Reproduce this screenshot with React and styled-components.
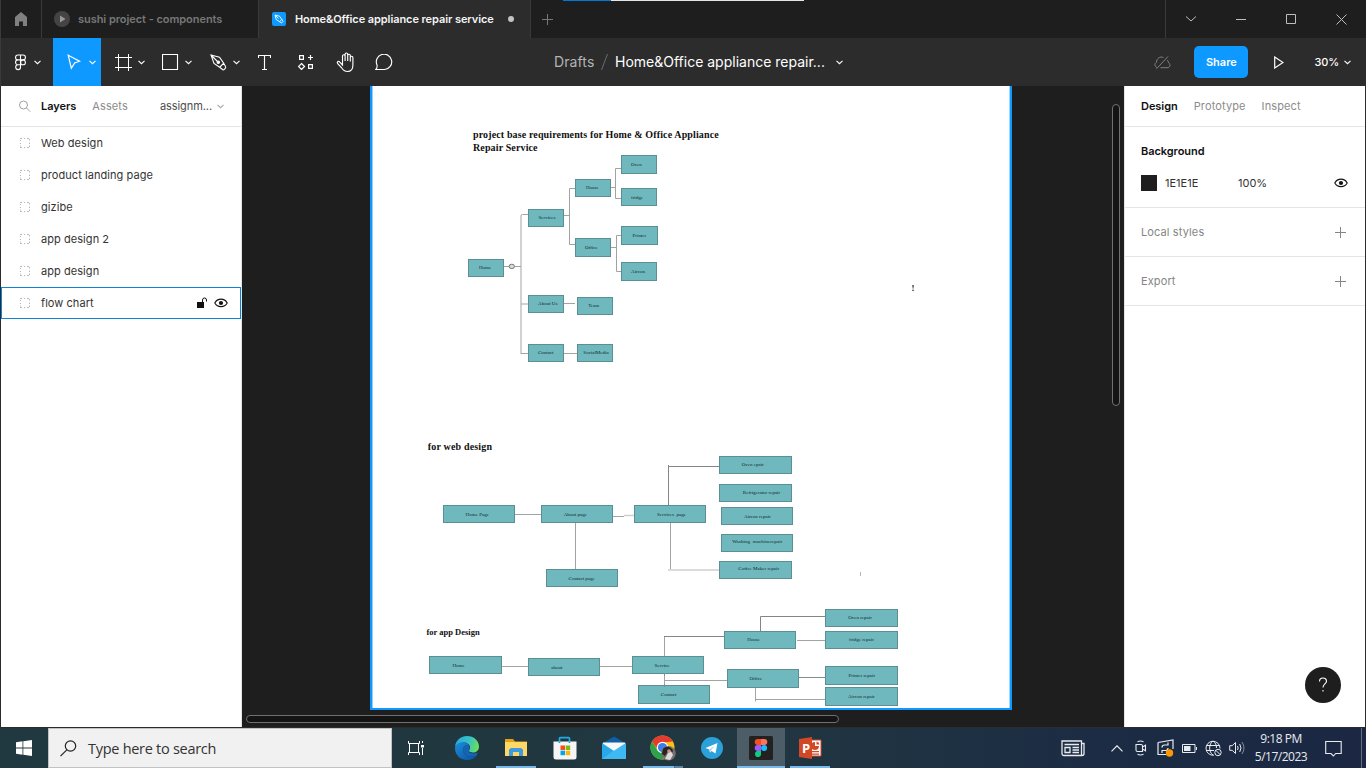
import React from "react";
import styled, { createGlobalStyle } from "styled-components";

const GlobalStyle = createGlobalStyle`
  * { box-sizing: border-box; }
  body { margin: 0; background: #1e1e1e; overflow: hidden; }
`;

const Screen = styled.div`
  width: 1366px;
  height: 768px;
  display: grid;
  grid-template-rows: 38px 48px 642px 40px;
  font-family: Inter, "Liberation Sans", sans-serif;
  font-size: 11px;
  background: #1e1e1e;
  overflow: hidden;
`;

const Icon = styled.svg.attrs((p) => ({
  fill: "none",
  stroke: p.stroke ?? "currentColor",
}))`
  display: block;
  flex: none;
`;

/* ---------- Tab bar ---------- */

const TabBar = styled.header`
  display: flex;
  background: #1e1e1e;
  border-left: 1px solid #3a3a3a;
  position: relative;
`;

const HomeTab = styled.div`
  width: 41px;
  display: flex;
  align-items: center;
  justify-content: center;
  border-right: 1px solid #3a3a3a;
  color: #808080;
`;

const Tab = styled.div`
  width: ${(p) => p.$width}px;
  display: flex;
  align-items: center;
  padding-left: ${(p) => p.$pad}px;
  gap: ${(p) => p.$gap}px;
  border-right: 1px solid #3a3a3a;
  background: ${(p) => (p.$active ? "#2c2c2c" : "#1e1e1e")};
  color: ${(p) => (p.$active ? "#f4f4f4" : "#777")};
  font-weight: 600;
  font-size: 11px;
  letter-spacing: ${(p) => p.$track}px;
  white-space: nowrap;
`;

const Unsaved = styled.span`
  width: 6px;
  height: 6px;
  border-radius: 50%;
  background: #c4c4c4;
  margin-left: 5px;
`;

const NewTab = styled.div`
  width: 33px;
  display: flex;
  align-items: center;
  justify-content: center;
  color: #777;
`;

const WindowButtons = styled.div`
  margin-left: auto;
  width: 201px;
  display: flex;
  border-left: 1px solid #3a3a3a;
  color: #bdbdbd;
`;

const WindowButton = styled.div`
  width: 50px;
  display: flex;
  align-items: center;
  justify-content: center;
`;

const Progress = styled.div`
  position: absolute;
  top: 0;
  left: 562px;
  width: 241px;
  height: 1px;
  background: linear-gradient(to right, #0078d7 48px, #e6e6e6 48px);
`;

/* ---------- Toolbar ---------- */

const Toolbar = styled.div`
  display: flex;
  background: #2c2c2c;
  border-left: 1px solid #3a3a3a;
  color: #fff;
`;

const ToolGroup = styled.div`
  display: flex;
  width: 553px;
`;

const Tool = styled.div`
  width: ${(p) => p.$width}px;
  height: 48px;
  padding-left: ${(p) => p.$pad || 0}px;
  display: flex;
  align-items: center;
  justify-content: ${(p) => (p.$pad ? "flex-start" : "center")};
  gap: ${(p) => p.$gap ?? 6}px;
  background: ${(p) => (p.$active ? "#0d99ff" : "transparent")};
`;

const FileTitle = styled.div`
  display: flex;
  align-items: center;
  font-size: 14px;
  white-space: nowrap;
`;

const Folder = styled.span`
  color: #b3b3b3;
  width: 47px;
  padding-bottom: 2px;
  letter-spacing: 0.1px;
`;

const FileName = styled.span`
  margin-left: 7px;
  width: 221px;
  padding-bottom: 2px;
  letter-spacing: 0;
`;

const ToolbarRight = styled.div`
  margin-left: auto;
  display: flex;
  align-items: center;
`;

const ShareButton = styled.div`
  width: 54px;
  height: 32px;
  margin: 0 26px 0 23px;
  border-radius: 5px;
  background: #0d99ff;
  font-weight: 600;
  font-size: 11px;
  display: flex;
  align-items: center;
  justify-content: center;
`;

const Zoom = styled.div`
  display: flex;
  align-items: center;
  gap: 5px;
  margin: 0 15px 0 30px;
  font-size: 11px;
  font-weight: 500;
  letter-spacing: -0.1px;
`;

/* ---------- Panels ---------- */

const Workspace = styled.main`
  display: grid;
  grid-template-columns: 241px 882px 241px;
  border-left: 1px solid #2c2c2c;
  border-right: 1px solid #2c2c2c;
  border-bottom: 1px solid #2c2c2c;
`;

const Sidebar = styled.aside`
  background: #fff;
  border-right: 1px solid #e5e5e5;
  color: #333;
`;

const SidebarHead = styled.div`
  height: 41px;
  padding: 0 17px 0 17px;
  display: flex;
  align-items: center;
  border-bottom: 1px solid #e5e5e5;
`;

const PanelTab = styled.span`
  margin-right: 16px;
  color: ${(p) => (p.$active ? "#111" : "#8c8c8c")};
  font-weight: ${(p) => (p.$active ? 600 : 400)};
  letter-spacing: ${(p) => (p.$active ? -0.05 : 0.12)}px;
`;

const PageName = styled.span`
  margin-left: auto;
  margin-right: 5px;
  color: #4d4d4d;
  letter-spacing: -0.08px;
`;

const LayerRow = styled.div`
  height: 32px;
  padding: 0 13px 0 17px;
  display: flex;
  align-items: center;
  gap: 8px;
  letter-spacing: 0.06px;
  box-shadow: ${(p) => (p.$selected ? "inset 0 0 0 1px #0f83d6" : "none")};
`;

const LayerLabel = styled.span`
  flex: 1;
`;

const Inspector = styled.aside`
  background: #fff;
  border-left: 1px solid #e5e5e5;
  position: relative;
  color: #333;
`;

const InspectorHead = styled.div`
  height: 41px;
  padding-left: 16px;
  display: flex;
  align-items: center;
  border-bottom: 1px solid #e5e5e5;
`;

const Section = styled.section`
  height: ${(p) => p.$height}px;
  padding: 0 17px 0 16px;
  display: flex;
  flex-direction: column;
  justify-content: center;
  gap: 16px;
  border-bottom: 1px solid #e5e5e5;
`;

const SectionRow = styled.div`
  height: 16px;
  padding-right: 2px;
  display: flex;
  align-items: center;
  justify-content: space-between;
  letter-spacing: ${(p) => (p.$muted ? 0.12 : -0.05)}px;
  color: ${(p) => (p.$muted ? "#858585" : "#111")};
  font-weight: ${(p) => (p.$bold ? 600 : 400)};
`;

const FillRow = styled.div`
  height: 16px;
  display: grid;
  grid-template-columns: 24px 73px 1fr auto;
  align-items: center;
`;

const Swatch = styled.div`
  width: 16px;
  height: 16px;
  background: #1e1e1e;
`;

const HelpButton = styled.div`
  position: absolute;
  right: 24px;
  bottom: 24px;
  width: 36px;
  height: 36px;
  border-radius: 50%;
  background: #1e1e1e;
  color: #fff;
  display: flex;
  align-items: center;
  justify-content: center;
`;

/* ---------- Canvas ---------- */

const Canvas = styled.div`
  position: relative;
  background: #1e1e1e;
  overflow: hidden;
`;

const Artboard = styled.div`
  position: absolute;
  left: 128px;
  top: -10px;
  width: 642px;
  height: 634px;
  background: #fff;
  border: 2px solid #0d99ff;
  box-shadow: inset 1px 0 #8fd0ff, inset -1px 0 #a5d8ff;
`;

const Board = styled.div`
  position: absolute;
  left: -242px;
  top: -86px;
  width: 1366px;
  height: 768px;
`;

const Wires = styled.svg`
  position: absolute;
  left: 0;
  top: 0;
  fill: none;
  stroke-width: 1;
`;

const Node = styled.div`
  position: absolute;
  left: ${(p) => p.$x}px;
  top: ${(p) => p.$y}px;
  width: ${(p) => p.$w}px;
  height: 18.3px;
  background: #6fb8be;
  border: 1px solid #5b8f93;
`;

const NodeLabel = styled.span`
  position: absolute;
  left: ${(p) => p.$x}px;
  top: ${(p) => p.$y}px;
  transform: translate(-50%, -50%);
  font: 5px/6px "Liberation Serif", serif;
  letter-spacing: ${(p) => p.$track || 0}px;
  color: #12282a;
  white-space: pre;
`;

const Heading = styled.div`
  position: absolute;
  left: ${(p) => p.$x}px;
  top: ${(p) => p.$y}px;
  font: bold ${(p) => p.$size}px/13px "Liberation Serif", serif;
  letter-spacing: ${(p) => p.$track || 0}px;
  color: #111;
  white-space: pre;
`;

const ScrollThumb = styled.div`
  position: absolute;
  left: ${(p) => p.$x}px;
  top: ${(p) => p.$y}px;
  width: ${(p) => p.$w}px;
  height: ${(p) => p.$h}px;
  border: 1px solid #707070;
  border-radius: 4px;
  background: #141414;
`;

/* ---------- Taskbar ---------- */

const Taskbar = styled.footer`
  display: flex;
  background: linear-gradient(to right, #20383f 0, #213741 55%, #1c2c44 80%, #1b2743 100%);
  color: #fff;
  font-family: "Open Sans", "Noto Sans", sans-serif;
`;

const StartButton = styled.div`
  width: 48px;
  display: flex;
  align-items: center;
  justify-content: center;
`;

const SearchBox = styled.div`
  width: 344px;
  padding-left: 11px;
  display: flex;
  align-items: center;
  gap: 11px;
  background: #f1f1f1;
  border: 1px solid #bfc3c4;
  color: #333;
  font-size: 14.5px;
  letter-spacing: -0.28px;
`;

const AppSlot = styled.div`
  width: 48px;
  margin-right: ${(p) => p.$gap ?? 1}px;
  display: flex;
  align-items: center;
  justify-content: center;
  position: relative;
  background: ${(p) => (p.$active ? "#4d5d67" : "transparent")};
`;

const Underline = styled.div`
  position: absolute;
  bottom: 0;
  left: ${(p) => p.$inset}px;
  right: ${(p) => p.$inset}px;
  height: 2px;
  background: ${(p) =>
    p.$grouped
      ? "linear-gradient(to right, #76b9ed 31px, #35566e 31px, #5a86a8 32px)"
      : "#76b9ed"};
`;

const Tray = styled.div`
  margin-left: auto;
  display: flex;
  align-items: center;
  padding-right: 4px;
  color: #e8ebef;
`;

const TrayItem = styled.div`
  width: ${(p) => p.$width || 24}px;
  display: flex;
  justify-content: center;
`;

const Clock = styled.div`
  width: 64px;
  font-size: 12px;
  line-height: 18px;
  letter-spacing: -0.5px;
  text-align: center;
`;

const ShowDesktop = styled.div`
  width: 1px;
  height: 40px;
  background: #66707f;
`;

const PowerPoint = styled.div`
  position: relative;
`;

const PowerPointLetter = styled.span`
  position: absolute;
  left: 4px;
  top: 4px;
  font: bold 13px/16px "Open Sans", sans-serif;
`;

/* ---------- Icons ---------- */

const Chevron = ({ color }) => (
  <Icon width="7" height="5" viewBox="0 0 7 5" stroke={color}>
    <path d="M.5 .8 3.5 3.7 6.5 .8" strokeWidth="1.1" />
  </Icon>
);

const Eye = () => (
  <Icon width="14" height="10" viewBox="0 0 14 10">
    <path d="M.8 5C3.5-.2 10.5-.2 13.2 5 10.5 9.8 3.5 9.8.8 5Z" stroke="#111" strokeWidth="1.1" />
    <circle cx="7" cy="5" r="2.1" fill="#111" stroke="none" />
  </Icon>
);

const FrameGlyph = () => (
  <Icon width="15" height="12" viewBox="0 0 15 12" stroke="#b8b8b8">
    <path d="M2 1.500h2M6 1.500h1M9 1.500h2M2 10.500h2M6 10.500h1M9 10.500h2M2.500 3v1M2.500 6v1M2.500 8.500v1M11.500 2v1.500M11.500 5.500v1.500M11.500 8.500v1.500" />
  </Icon>
);

const Plus = ({ size = 11 }) => (
  <Icon width={size} height={size} viewBox="0 0 11 11">
    <path d="M5.5 0v11M0 5.5h11" />
  </Icon>
);

/* ---------- Data ---------- */

const layers = ["Web design", "product landing page", "gizibe", "app design 2", "app design", "flow chart"];

// x, y, width, label, label centre x, label centre y, tracking
const nodes = [
  [621, 155.3, 36, "Oven", 636.3, 165],
  [621, 188, 36, "fridge", 637, 197.7],
  [575, 179, 36, "House", 592.3, 188.3],
  [528, 208.7, 36, "Services", 547, 218],
  [575, 238.3, 36, "Office", 591.3, 248],
  [621.4, 226.4, 36.3, "Printer", 639.4, 236],
  [621, 262.3, 36, "Aircon", 638, 271.8],
  [468, 259, 36, "Home", 485, 268.3],
  [528, 294.7, 36, "About Us", 547.7, 304.2],
  [577, 296.5, 36, "Team", 593.7, 306],
  [528, 344, 36, "Contact", 545.7, 353],
  [577, 344, 36, "SocialMedia", 596, 353],
  [442.5, 505, 72, "Home Page", 477.3, 514.5, 0.05],
  [541, 505, 72.2, "About page", 575.3, 514.5],
  [634, 505, 72.2, "Services  page", 671.5, 514.5],
  [545.6, 569, 72, "Contact page", 581.7, 578.5],
  [719, 456, 72.5, "Oven epair", 752.7, 465.3],
  [719.3, 484, 72.5, "Refrigerator repair", 761.5, 493.2],
  [721, 507, 72, "Aircon repair", 757.3, 516.5],
  [721, 534, 72, "Washing  machinerepair", 757.3, 541.7, 0.08],
  [719, 561, 72.5, "Coffee Maker repair", 758.7, 569],
  [429, 656, 72.5, "Home", 458.6, 665.8],
  [528, 658.2, 72, "about", 556.8, 668],
  [632, 656, 72, "Service", 662, 665.8],
  [638, 685.4, 72, "Contact", 668.6, 695],
  [724, 630.5, 72, "House", 753.6, 640],
  [727.4, 669.4, 72, "Office", 755.8, 679],
  [825.4, 608.5, 72.2, "Oven repair", 860, 618],
  [825.4, 630.5, 72.2, "fridge repair", 861.4, 640],
  [825.4, 666.4, 72.2, "Printer repair", 861.8, 676],
  [825.4, 687.4, 72.2, "Aircon repair", 861.4, 697],
];

const softWires =
  "M504 266.5h5M515 266.5h6M521 353.5h7M521 304h7M528 214.5h-5.5q-1.5 0-1.5 1.5V354" +
  "M564 215.5h5.5M575 188.5h-5.5V244.5h5.5M611 187.5h4.5M621 168.5h-5.5V198.5h5.5" +
  "M611 247.5h5.5M622 235.5h-5.5V271.5h5M564 303.5h11M564 353.5h13" +
  "M515 514.5h26M613 516.5h11M575.5 523v46M670.5 523v46" +
  "M501.5 666.5h26.5M600 666.5h32M664.5 656v-19.5M664.5 674v12M664.5 680.5h63" +
  "M797 640.5h28.5M755.5 688v13.5M755.5 699.5h70";

const darkWires = "M668.5 505V465M668 466.5h51M664 636.5h60M760.5 631V616.5h65";

function DiagramCanvas() {
  return (
    <Canvas>
      <Artboard />
      <Board>
        <Wires width="1366" height="768">
          <path d={softWires} stroke="#a3a3a3" />
          <path d={darkWires} stroke="#858585" />
          <path d="M624 515.5h10M668 570h51" stroke="#cfcfcf" strokeWidth="1.5" />
          <ellipse cx="511.8" cy="266.4" rx="2.7" ry="2.2" fill="#d9d9d9" stroke="#777" />
          <path d="M860.5 572v4" stroke="#b5b5b5" />
        </Wires>
        {nodes.map(([x, y, w, label, lx, ly, track], i) => (
          <React.Fragment key={i}>
            <Node $x={x} $y={y} $w={w} />
            <NodeLabel $x={lx} $y={ly} $track={track}>{label}</NodeLabel>
          </React.Fragment>
        ))}
        <Wires width="1366" height="768">
          <path d="M664.5 673v3M664.5 684v3M798 677.5h28" stroke="#7d8f91" />
        </Wires>
        <Heading $x={473} $y={128} $size={10} $track={0.13}>
          {"project base requirements for Home & Office Appliance\nRepair Service"}
        </Heading>
        <Heading $x={427.7} $y={440} $size={10} $track={0.18}>for web design</Heading>
        <Heading $x={426.4} $y={626} $size={8.5}>for app Design</Heading>
        <Heading $x={911.5} $y={281.5} $size={9}>!</Heading>
      </Board>
      <ScrollThumb $x={870} $y={18} $w={8} $h={302} />
      <ScrollThumb $x={4} $y={629} $w={593} $h={8} />
    </Canvas>
  );
}

function Tools() {
  return (
    <ToolGroup>
      <Tool $width={52} $pad={13} $gap={7}>
        <Icon width="13" height="17" viewBox="0 0 13 17" strokeWidth="1.1">
          <path d="M6.5 1H4a2.4 2.4 0 0 0 0 4.9h2.500ZM6.500 1H9a2.400 2.400 0 0 1 0 4.900H6.500ZM6.500 5.900H4a2.400 2.400 0 0 0 0 4.900h2.500ZM6.500 10.800H4a2.400 2.400 0 1 0 2.500 2.400Z" />
          <circle cx="9" cy="8.4" r="2.4" />
        </Icon>
        <Chevron />
      </Tool>
      <Tool $width={48} $pad={14} $gap={8} $active>
        <Icon width="14" height="16" viewBox="0 0 14 16" strokeWidth="1.2">
          <path d="M1.200 1.200 12.600 7.200 7.600 9 4.300 14.200Z" />
        </Icon>
        <Chevron />
      </Tool>
      <Tool $width={48} $pad={14}>
        <Icon width="17" height="17" viewBox="0 0 17 17">
          <path d="M3.500 0v17M13.500 0v17M0 3.500h17M0 13.500h17" />
        </Icon>
        <Chevron />
      </Tool>
      <Tool $width={48} $pad={13}>
        <Icon width="17" height="17" viewBox="0 0 17 17">
          <path d="M.5.500h15v15H.500Z" strokeWidth="1.100" />
        </Icon>
        <Chevron />
      </Tool>
      <Tool $width={48} $pad={13}>
        <Icon width="17" height="17" viewBox="0 0 17 17" strokeWidth="1.100">
          <path d="M1 1 9.500 3.200 13.700 9.200 9.700 13.200 4 9.500Z M1 1 7.500 7.500M13.700 9.200l1.800 3.300q.6 1-.3 1.900l-.9.9q-.9.900-1.800.2L9.700 13.200" />
          <circle cx="8.300" cy="8.200" r="1.200" fill="currentColor" />
        </Icon>
        <Chevron />
      </Tool>
      <Tool $width={39}>
        <Icon width="13" height="17" viewBox="0 0 13 17">
          <path d="M.5 4V1.500h12V4M6.500 1.500v14M4 15.500h5" strokeWidth="1.150" />
        </Icon>
      </Tool>
      <Tool $width={44}>
        <Icon width="16" height="16" viewBox="0 0 16 16" strokeWidth="1.200">
          <path d="M1.600 1.600h3.800v3.800H1.600ZM10.600 10.600h3.800v3.800h-3.800ZM12.500 1v5M10 3.500h5M3.500 9.500 6.500 12.500 3.500 15.500.500 12.500Z" />
        </Icon>
      </Tool>
      <Tool $width={34}>
        <Icon width="19" height="21" viewBox="0 0 19 21" strokeWidth="1.150">
          <path d="M6.500 10.500V4a1.300 1.300 0 0 1 2.600 0V9M9.100 8V2.300a1.300 1.300 0 0 1 2.600 0V9M11.700 8V3.500a1.300 1.300 0 0 1 2.600 0V9.500M14.300 8V5.500a1.300 1.300 0 0 1 2.600 0V13c0 4-2 6.500-5.500 6.500-3 0-4.500-1.500-6-4L1.500 11.300c-.8-1.700 1.200-2.500 2.300-1.200L6.500 13V9" />
        </Icon>
      </Tool>
      <Tool $width={43}>
        <Icon width="18" height="17" viewBox="0 0 18 17">
          <path d="M.8 15.500c1.500-1.300 1.500-2.800 1.200-4.500A7.700 7.700 0 1 1 9.700 15.500Z" strokeWidth="1.150" />
        </Icon>
      </Tool>
    </ToolGroup>
  );
}

function TaskbarApps() {
  return (
    <>
      <AppSlot $gap={3}>
        <Icon width="17" height="16" viewBox="0 0 17 16">
          <path d="M.500 1v2.500h11V1M.500 15v-2.500h11V15M1.500 3.500v9h9v-9M14.500 1v2M14.500 8v7" />
          <path d="M13 5h3v2.500h-3z" fill="#fff" stroke="none" />
        </Icon>
      </AppSlot>
      <AppSlot>
        <Icon width="24" height="24" viewBox="0 0 24 24" stroke="none">
          <defs>
            <linearGradient id="edgeTop" x1="0" x2="1" y1=".3" y2=".5">
              <stop offset="0" stopColor="#2aa8e0" />
              <stop offset=".55" stopColor="#35c1c8" />
              <stop offset="1" stopColor="#6be05a" />
            </linearGradient>
            <linearGradient id="edgeLow" x1="0" x2="1" y1="0" y2="1">
              <stop offset="0" stopColor="#1b8fdd" />
              <stop offset="1" stopColor="#0b4f9e" />
            </linearGradient>
          </defs>
          <path d="M0 12C0 5 5 0 12 0s12 5 12 10.500c0 4-3 6-6 6-2.500 0-4-.8-4-1.700 0-.7 1-1.300 1-3.300 0-3-3-5-6-5-5 0-9 3-9 5.500Z" fill="url(#edgeTop)" />
          <path d="M0 12c.5-3.500 4-5.700 7.500-5.700 3 0 5 1.200 6 2.700-3-.5-5.500 2-5.500 5 0 4 4 7 8.500 7 2 0 3.800-.8 5.300-1.500C19.500 22.500 16 24 12 24 5 24 0 19 0 12Z" fill="url(#edgeLow)" />
          <path d="M8 14c0-3 2.500-5.500 5.500-5 .8 1 1.200 2.800.5 4.700-1 2.300 1.500 3.600 4.500 3.600 2 0 3.500-.6 4.200-1-.5 2-1 2.700-1 3.200-5.700 3-13.700.5-13.700-5.500Z" fill="#1463b5" />
        </Icon>
      </AppSlot>
      <AppSlot>
        <Icon width="22" height="20" viewBox="0 0 22 20" stroke="none">
          <path d="M0 1h8l2 2.500h12V18H0Z" fill="#e5a015" />
          <path d="M0 4h22v14H0Z" fill="#ffd766" />
          <path d="M4 18v-6.500L6 10h10l2 1.500V18h-4v-4H8v4Z" fill="#3f9be0" />
        </Icon>
        <Underline $inset={4} />
      </AppSlot>
      <AppSlot>
        <Icon width="24" height="24" viewBox="0 0 24 24" stroke="none">
          <path d="M6.500 7V2.700q0-1 1-1h8q1 0 1 1V7" stroke="#1eaee5" strokeWidth="1.700" />
          <path d="M.5 5.500h23V21q0 2.500-2.500 2.500H3Q.500 23.500.500 21Z" fill="#f5f5f5" />
          <path d="M6.500 5.500v1.500M16.500 5.500v1.500" stroke="#1496cc" strokeWidth="1.700" />
          <path d="M7.500 9.500H12V14H7.500Z" fill="#f1511b" />
          <path d="M12.700 9.500h4.500V14h-4.500Z" fill="#80b916" />
          <path d="M7.500 14.700H12v4.500H7.500Z" fill="#02a4ef" />
          <path d="M12.700 14.700h4.500v4.500h-4.500Z" fill="#fcb80a" />
        </Icon>
      </AppSlot>
      <AppSlot>
        <Icon width="24" height="24" viewBox="0 0 24 24" stroke="none">
          <path d="M0 7.500 12 .5l12 7v2H0Z" fill="#0f5fa8" />
          <path d="M1 6.500h22V16H1Z" fill="#f5f7f9" />
          <path d="M0 7 12 15 24 7v16H0Z" fill="#28a8ea" />
          <path d="M0 23 12 14.500 24 7v16Z" fill="#4cc2f5" opacity=".65" />
        </Icon>
      </AppSlot>
      <AppSlot>
        <Icon width="26" height="26" viewBox="0 0 26 26" stroke="none">
          <circle cx="12.500" cy="12.500" r="12" fill="#fbc116" />
          <path d="M2.100 6.500A12 12 0 0 1 22.900 6.500L12.500 7.500 8 15Z" fill="#e33b2e" />
          <path d="M2.100 6.500A12 12 0 0 0 12.500 24.500L17 15.500 7.500 15.500Z" fill="#2ba24c" />
          <circle cx="12.500" cy="12.500" r="5.800" fill="#fff" />
          <circle cx="12.500" cy="12.500" r="4.600" fill="#3d7de8" />
          <circle cx="18.500" cy="18.300" r="7.200" fill="#77706e" />
          <path d="M13 14c3-4 9-2 10 2l-2 3-3-3-3 5-3-2Z" fill="#292322" />
          <path d="M18 18l3-2 2 4-3 5-5-1Z" fill="#dedad8" />
          <circle cx="19" cy="16" r="1.800" fill="#c59984" />
        </Icon>
        <Underline $inset={4} $grouped />
      </AppSlot>
      <AppSlot>
        <Icon width="22" height="22" viewBox="0 0 22 22" stroke="none">
          <circle cx="11" cy="11" r="11" fill="#2ba0da" />
          <path d="M4.500 11 16.500 6 14.500 16.500 10.500 14 9 15.500 8.300 12.500Z" fill="#fff" />
          <path d="M8.300 12.500 14 8.500 10 13.500 9 15.500Z" fill="#b7d6e6" />
        </Icon>
      </AppSlot>
      <AppSlot $active>
        <Icon width="24" height="24" viewBox="0 0 24 24" stroke="none">
          <rect width="24" height="24" rx="1.500" fill="#222" />
          <path d="M12 3H8.700a3 3 0 0 0 0 6H12Z" fill="#f24e1e" />
          <path d="M12 3h3.300a3 3 0 0 1 0 6H12Z" fill="#ff7262" />
          <path d="M12 9H8.700a3 3 0 0 0 0 6H12Z" fill="#a259ff" />
          <circle cx="15.100" cy="12" r="3" fill="#1abcfe" />
          <path d="M12 15H8.700a3 3 0 1 0 3.300 3Z" fill="#0acf83" />
        </Icon>
        <Underline $inset={0} />
      </AppSlot>
      <AppSlot>
        <PowerPoint>
          <Icon width="24" height="24" viewBox="0 0 24 24" stroke="none">
            <path d="M13 4h10v16H13Z" fill="#fff" stroke="#d24726" />
            <path d="M1 3 14 1v22L1 21Z" fill="#d24726" />
            <path d="M17 6v4h4a4 4 0 1 1-4-4ZM18.500 5.500a3.500 3.500 0 0 1 3 3h-3ZM14 15h7v1.300h-7ZM14 17.500h7v1.200h-7Z" fill="#d24726" />
          </Icon>
          <PowerPointLetter>P</PowerPointLetter>
        </PowerPoint>
        <Underline $inset={4} />
      </AppSlot>
    </>
  );
}

function SystemTray() {
  return (
    <Tray>
      <TrayItem $width={65}>
        <Icon width="24" height="17" viewBox="0 0 24 17" strokeWidth="1.300">
          <path d="M1 1h19.500v14.500H3Q1 15.500 1 13.500ZM20.500 3.500H23v10q0 2-2 2H18M3.500 4.500h14.500M11.500 7.500H18M11.500 10H18M11.500 12.500H18" />
          <path d="M4 7.500h5v5H4Z" />
        </Icon>
      </TrayItem>
      <TrayItem>
        <Icon width="12" height="7" viewBox="0 0 12 7"><path d="M.5 6.300 6 .8l5.500 5.500" strokeWidth="1.200" /></Icon>
      </TrayItem>
      <TrayItem>
        <Icon width="12" height="16" viewBox="0 0 12 16" strokeWidth="1.100">
          <path d="M1 4.500h5q1.500 0 1.500 1.500v5.500H2.500Q1 11.500 1 10ZM7.500 7l3-1.800v5.600l-3-1.800M2.500 1.800Q5.500.300 8.500 1.800M2.500 14.200q3 1.500 6 0" />
        </Icon>
      </TrayItem>
      <TrayItem>
        <Icon width="17" height="18" viewBox="0 0 17 18" strokeWidth="1.200">
          <path d="M1 3.500 16 1v9M9 15.500H1v-12M5 8.500q0-2.500 2.500-2.500H11M11 3.500V6H8.500M11 9q0 2.500-2.500 2.500H5M5 14v-2.500h2.500" />
          <circle cx="12.500" cy="14" r="3.700" fill="#ff9800" stroke="none" />
        </Icon>
      </TrayItem>
      <TrayItem>
        <Icon width="15" height="9" viewBox="0 0 15 9">
          <path d="M.500.500h12.500v8H.500ZM14.500 3v3" />
          <path d="M2 2h6.500v5H2Z" fill="currentColor" stroke="none" />
        </Icon>
      </TrayItem>
      <TrayItem>
        <Icon width="17" height="17" viewBox="0 0 17 17">
          <path d="M9 15.200A7 7 0 1 1 15 8.500M8 1C3.500 4 3.500 12 8 15M8 1c2.500 1.800 3.500 4 3.500 7M1.500 5.500h13M1.500 10.500h7.500" />
          <circle cx="13" cy="12.500" r="3.200" />
          <path d="m10.800 10.300 4.400 4.400" />
        </Icon>
      </TrayItem>
      <TrayItem>
        <Icon width="17" height="14" viewBox="0 0 17 14">
          <path d="M.700 4.700h2.500L6.500 1.500v11L3.200 9.300H.700ZM8.500 5q1.300 2 0 4M10.700 3q2.600 4 0 8" />
          <path d="M13 1q4 6 0 12" opacity=".5" />
        </Icon>
      </TrayItem>
      <Clock>9:18 PM<br />5/17/2023</Clock>
      <TrayItem $width={40}>
        <Icon width="17" height="17" viewBox="0 0 17 17">
          <path d="M.700 1.500h15.500v12h-5.500L8.400 16 6 13.500H.700Z" strokeWidth="1.100" />
        </Icon>
      </TrayItem>
      <TrayItem $width={8} />
      <ShowDesktop />
    </Tray>
  );
}

const SearchIcon = styled(Icon)`
  margin-right: 10px;
`;

const UnlockIcon = styled(Icon)`
  margin-right: -1px;
`;

export default function App() {
  return (
    <Screen>
      <GlobalStyle />
      <TabBar>
        <HomeTab>
          <Icon width="12" height="14" viewBox="0 0 12 14" stroke="none">
            <path d="M6 0 12 5v9H8V9.500H4V14H0V5Z" fill="currentColor" />
          </Icon>
        </HomeTab>
        <Tab $width={217} $pad={12} $gap={8} $track={-0.05}>
          <Icon width="16" height="16" viewBox="0 0 16 16" stroke="none">
            <circle cx="8" cy="8" r="8" fill="#444" />
            <path d="M6 4.500v7L11.500 8Z" fill="#999" />
          </Icon>
          sushi project - components
        </Tab>
        <Tab $width={272} $pad={13} $gap={9} $track={-0.08} $active>
          <Icon width="14" height="14" viewBox="0 0 14 14" stroke="#fff">
            <rect width="14" height="14" rx="2" fill="#0d99ff" stroke="none" />
            <path d="m3 3 4.500 1.200 2.300 3.200L7.500 9.700 4.200 7.500ZM3 3l3.500 3.500M9.800 7.400l1.200 2L9.500 11l-2-1.300" strokeWidth=".9" />
          </Icon>
          Home&amp;Office appliance repair service
          <Unsaved />
        </Tab>
        <NewTab><Plus size={11} /></NewTab>
        <Progress />
        <WindowButtons>
          <WindowButton>
            <Icon width="12" height="8" viewBox="0 0 12 8"><path d="m1 1.500 5 4.500 5-4.500" /></Icon>
          </WindowButton>
          <WindowButton>
            <Icon width="10" height="2" viewBox="0 0 10 2"><path d="M0 1.500h10" /></Icon>
          </WindowButton>
          <WindowButton>
            <Icon width="10" height="10" viewBox="0 0 10 10"><path d="M.500.500h9v9h-9Z" /></Icon>
          </WindowButton>
          <WindowButton>
            <Icon width="11" height="11" viewBox="0 0 11 11"><path d="m.500.500 10 10M10.500.500l-10 10" /></Icon>
          </WindowButton>
        </WindowButtons>
      </TabBar>

      <Toolbar>
        <Tools />
        <FileTitle>
          <Folder>Drafts</Folder>
          <Icon width="7" height="16" viewBox="0 0 7 16" stroke="#6b6b6b"><path d="M6.500 0 .500 16" /></Icon>
          <FileName>Home&amp;Office appliance repair...</FileName>
          <Chevron />
        </FileTitle>
        <ToolbarRight>
          <Icon width="17" height="13" viewBox="0 0 17 13" stroke="#808080">
            <path d="M3 11.500C.5 10.500 .2 7.500 2.500 6.300 2.500 2.500 6 0 9.500 1.500M6.500 11.700H14c2.500-.700 2.600-4 .5-5-.2-1.200-.5-1.900-1.200-2.700M2.500 12.800 14 .500" />
          </Icon>
          <ShareButton>Share</ShareButton>
          <Icon width="10" height="13" viewBox="0 0 10 13"><path d="M.700 1v11L9 6.500Z" strokeWidth="1.200" /></Icon>
          <Zoom>30%<Chevron /></Zoom>
        </ToolbarRight>
      </Toolbar>

      <Workspace>
        <Sidebar>
          <SidebarHead>
            <SearchIcon width="13" height="13" viewBox="0 0 13 13" stroke="#a0a0a0">
              <circle cx="5.500" cy="5" r="4" />
              <path d="m8.500 8 3.700 3.700" />
            </SearchIcon>
            <PanelTab $active>Layers</PanelTab>
            <PanelTab>Assets</PanelTab>
            <PageName>assignm...</PageName>
            <Chevron color="#a8a8a8" />
          </SidebarHead>
          {layers.map((name) => (
            <LayerRow key={name} $selected={name === "flow chart"}>
              <FrameGlyph />
              <LayerLabel>{name}</LayerLabel>
              {name === "flow chart" && (
                <>
                  <UnlockIcon width="10" height="12" viewBox="0 0 10 12">
                    <path d="M0 5h7v6H0Z" fill="#111" stroke="none" />
                    <path d="M5.500 5V3a2 2 0 0 1 4 0v1.500" stroke="#111" />
                  </UnlockIcon>
                  <Eye />
                </>
              )}
            </LayerRow>
          ))}
        </Sidebar>

        <DiagramCanvas />

        <Inspector>
          <InspectorHead>
            <PanelTab $active>Design</PanelTab>
            <PanelTab>Prototype</PanelTab>
            <PanelTab>Inspect</PanelTab>
          </InspectorHead>
          <Section $height={81}>
            <SectionRow $bold>Background</SectionRow>
            <FillRow>
              <Swatch />
              <span>1E1E1E</span>
              <span>100%</span>
              <Eye />
            </FillRow>
          </Section>
          <Section $height={49}>
            <SectionRow $muted>Local styles<Plus /></SectionRow>
          </Section>
          <Section $height={49}>
            <SectionRow $muted>Export<Plus /></SectionRow>
          </Section>
          <HelpButton>
            <Icon width="10" height="16" viewBox="0 0 10 16">
              <path d="M1.500 4.500C1.500-.200 8.500-.200 8.500 4.200 8.500 7 5 7 5 10.500M5 13v1.500" strokeWidth="1.100" />
            </Icon>
          </HelpButton>
        </Inspector>
      </Workspace>

      <Taskbar>
        <StartButton>
          <Icon width="16" height="16" viewBox="0 0 16 16" stroke="none">
            <path d="M0 2.200 6.500 1.300v6.300H0ZM7.300 1.200 16 0v7.600H7.300ZM0 8.400h6.500v6.300L0 13.800ZM7.300 8.400H16V16l-8.700-1.200Z" fill="#fff" />
          </Icon>
        </StartButton>
        <SearchBox>
          <Icon width="17" height="17" viewBox="0 0 17 17" stroke="#222">
            <circle cx="10.500" cy="6" r="5.200" strokeWidth="1.200" />
            <path d="M6.800 9.800.500 16.200" strokeWidth="1.200" />
          </Icon>
          Type here to search
        </SearchBox>
        <TaskbarApps />
        <SystemTray />
      </Taskbar>
    </Screen>
  );
}
